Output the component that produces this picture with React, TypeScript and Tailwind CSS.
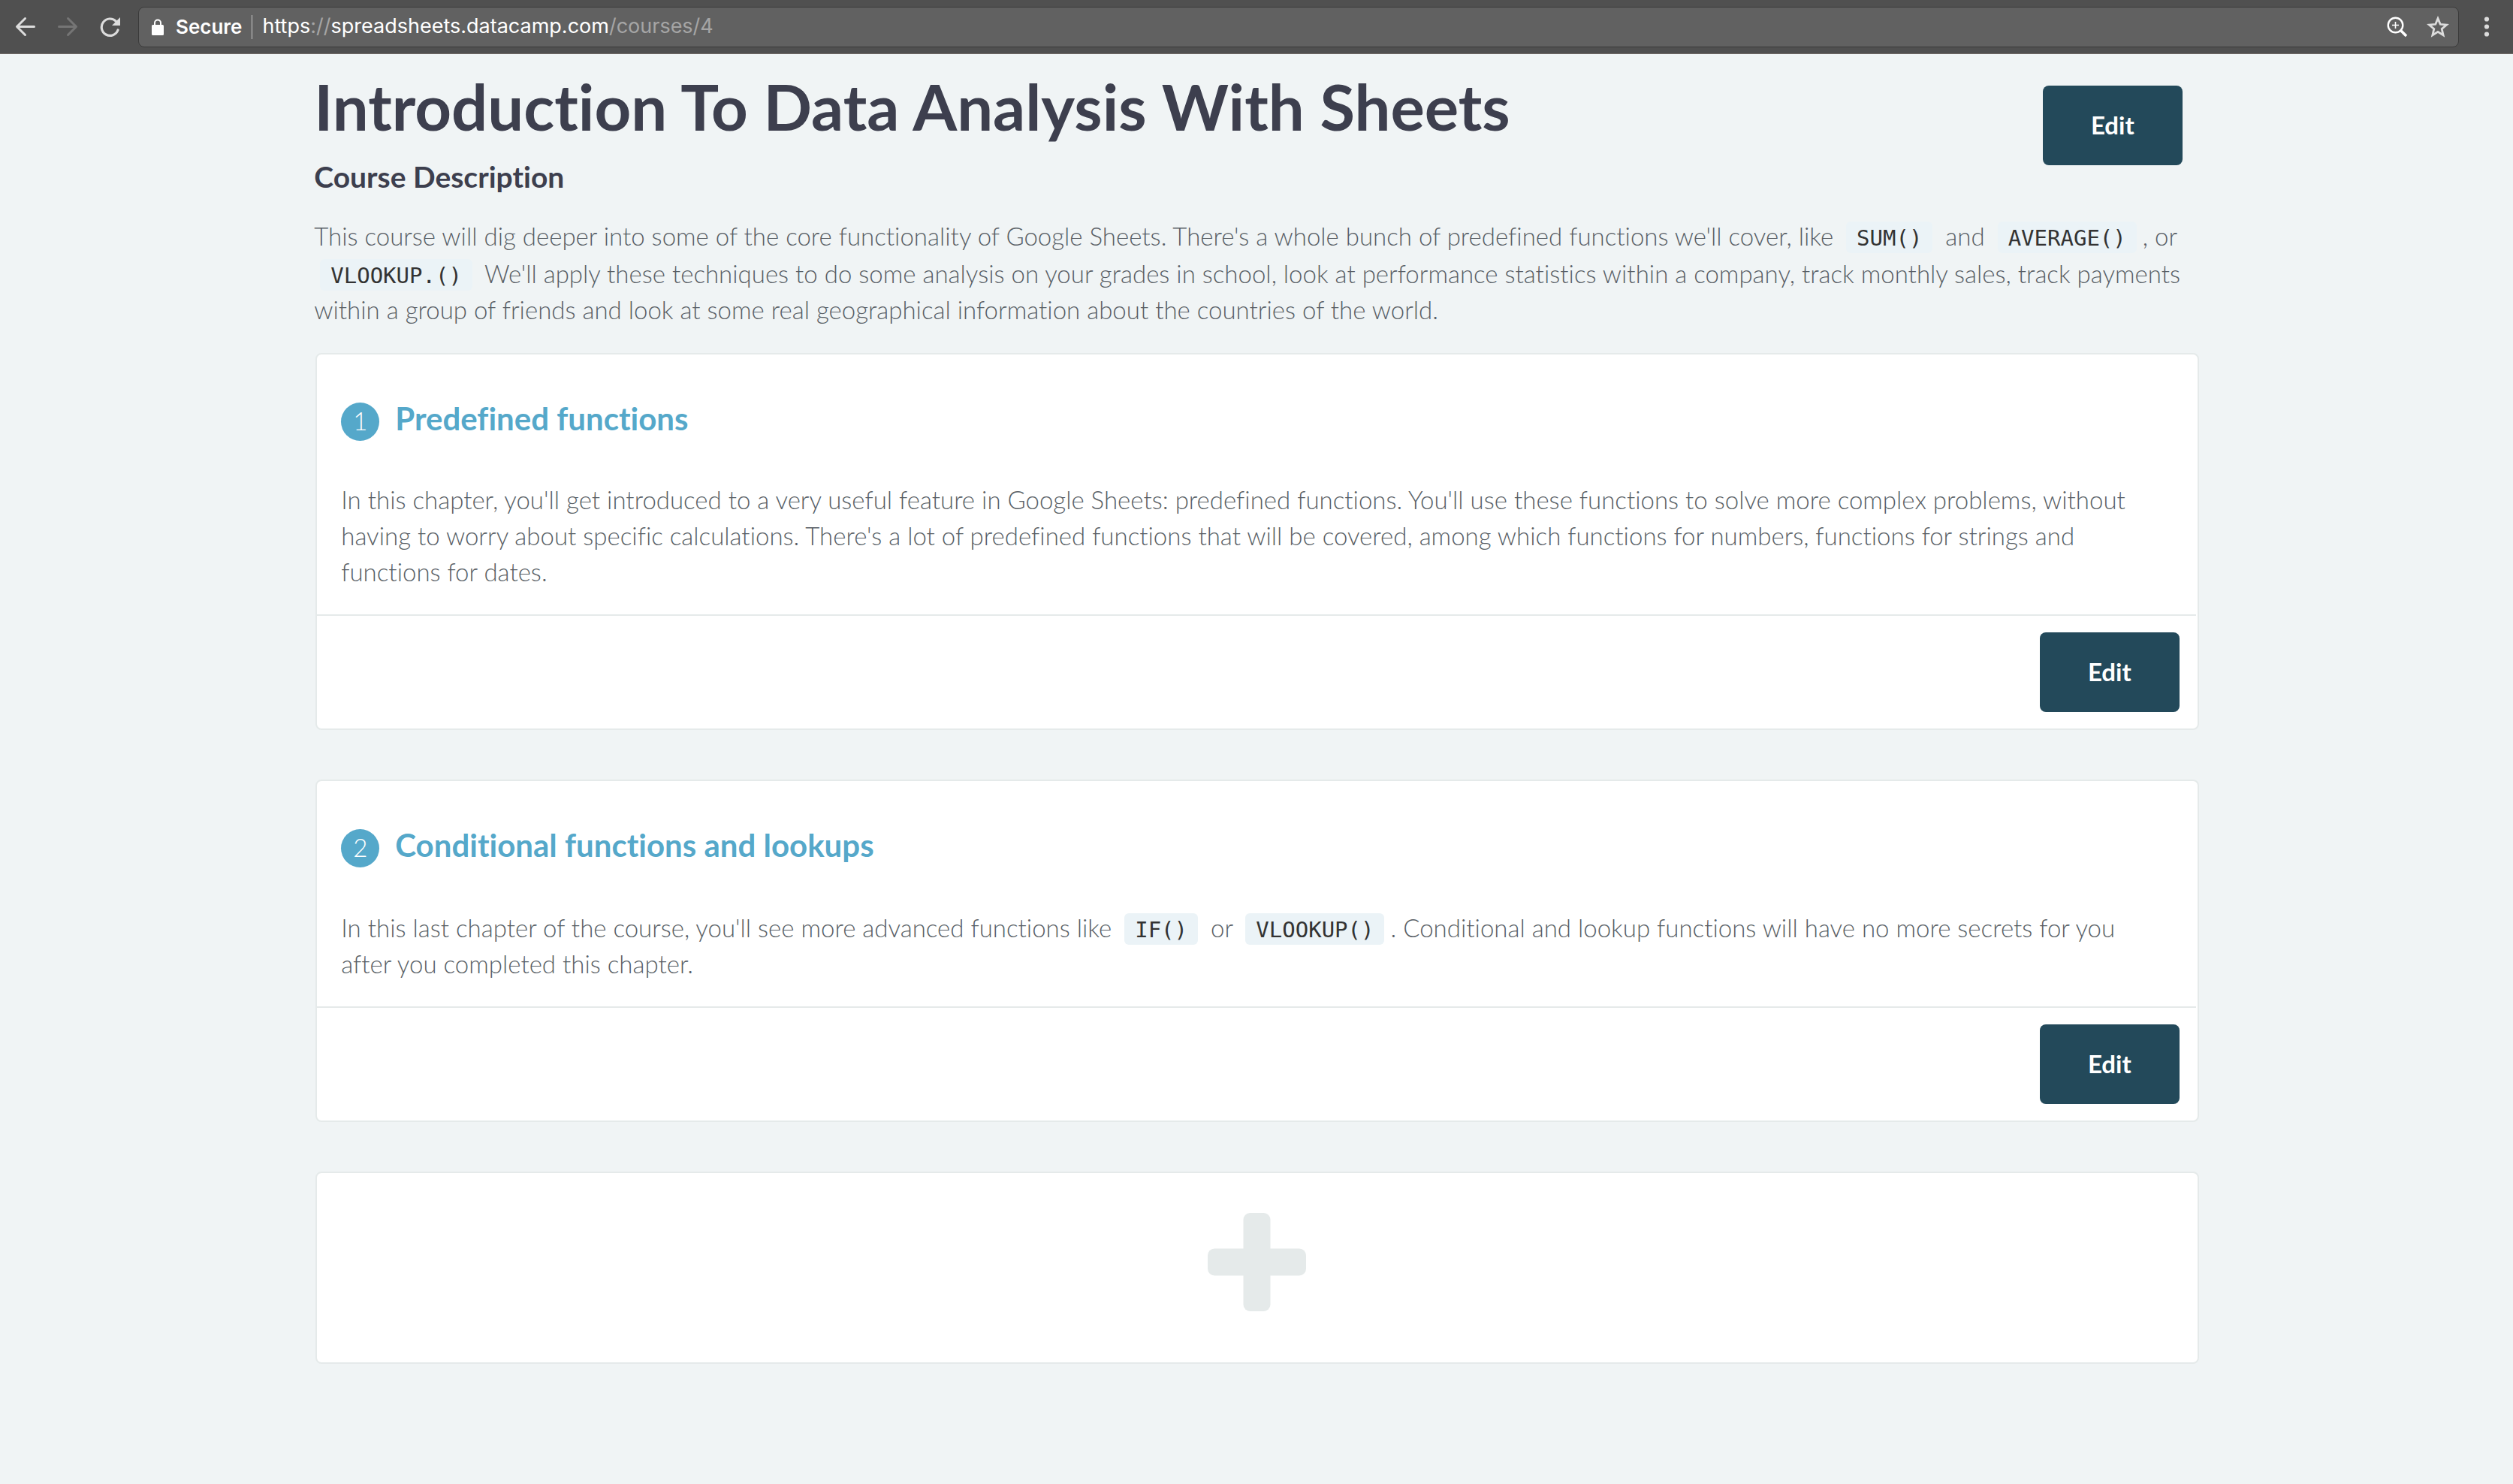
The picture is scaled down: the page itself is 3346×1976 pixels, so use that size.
import type { ReactNode } from "react";

function Code({ children }: { children: ReactNode }) {
  return (
    <code className="mx-2 mt-[7px] inline-block rounded-md bg-[#ebf3f7] px-[14px] pt-1 pb-[2px] font-['DejaVu_Sans_Mono',monospace] text-[29px] leading-[36px] text-[#333333]">
      {children}
    </code>
  );
}

function EditButton() {
  return (
    <button
      type="button"
      className="h-[106px] rounded-lg bg-[#23495a] px-[64px] text-[33px] font-bold text-white"
    >
      Edit
    </button>
  );
}

function Chapter({ number, title, children }: { number: number; title: string; children: ReactNode }) {
  return (
    <section className="rounded-lg border-2 border-[#e5eaea] bg-white">
      <div className="pt-16 pr-10 pb-[33px] pl-8">
        <div className="flex items-start gap-[21px]">
          <span className="h-[51px] w-[51px] rounded-full bg-[#55a8ca] text-center text-[33px] leading-[48px] font-light text-white">
            {number}
          </span>
          <h2 className="text-[42px] leading-none font-bold">
            <a href={"#chapter-" + number} className="text-[#55a8ca]">
              {title}
            </a>
          </h2>
        </div>
        <p className="mt-[54px] text-[33px] leading-[48px] font-light text-[#595f66]">{children}</p>
      </div>
      <div className="mr-[2px] flex justify-end border-t-2 border-[#e5eaea] px-[22px] py-[22px]">
        <EditButton />
      </div>
    </section>
  );
}

function BrowserBar() {
  return (
    <nav
      aria-label="Browser"
      className="flex h-[72px] items-center border-b border-[#6f6866] bg-[#505050] pl-5 font-['Inter',sans-serif] text-[#dcdcdc]"
    >
      <div className="flex gap-7">
        <button type="button" aria-label="Back">
          <svg className="h-7 w-7" viewBox="0 0 28 28" fill="none" stroke="currentColor" strokeWidth="3" strokeLinecap="round" strokeLinejoin="round">
            <path d="M25.5 13.5H3M13.5 2.5L2.5 13.5L13.5 24.5" />
          </svg>
        </button>
        <button type="button" aria-label="Forward" className="text-[#757575]">
          <svg className="h-7 w-7" viewBox="0 0 28 28" fill="none" stroke="currentColor" strokeWidth="3" strokeLinecap="round" strokeLinejoin="round">
            <path d="M2.5 13.5H25M14.5 2.5L25.5 13.5L14.5 24.5" />
          </svg>
        </button>
        <button type="button" aria-label="Reload">
          <svg className="h-7 w-7" viewBox="0 0 28 28">
            <path d="M22.6 6.5A11.2 11.2 0 1 0 25 18" fill="none" stroke="currentColor" strokeWidth="3.2" strokeLinecap="round" />
            <path d="M28 1V12H17Z" fill="currentColor" />
          </svg>
        </button>
      </div>
      <div className="ml-6 flex h-[54px] flex-1 items-center rounded-lg border border-[#3a3a3a] bg-[#616161] pr-3 pl-[17px] text-[27px] text-white">
        <svg className="h-[22px] w-4" viewBox="0 0 16 22" aria-hidden="true">
          <path d="M4 9V5.5a4 4 0 0 1 8 0V9" fill="none" stroke="currentColor" strokeWidth="2" />
          <rect y="8" width="16" height="14" rx="1.5" fill="currentColor" />
        </svg>
        <span className="ml-4 text-[26px] font-semibold">Secure</span>
        <span className="mx-[13px] h-8 w-px bg-[#c8c8c8]" />
        <span className="flex-1">
          https<span className="text-[#a5a5a5]">://</span>spreadsheets.datacamp.com
          <span className="text-[#a5a5a5]">/courses/4</span>
        </span>
        <button type="button" aria-label="Zoom" className="mr-[25px]">
          <svg className="h-7 w-7" viewBox="0 0 28 28" fill="none" stroke="currentColor">
            <circle cx="11.5" cy="11.5" r="9.8" strokeWidth="2.4" />
            <path d="M11.5 7v9M7 11.5h9" strokeWidth="1.6" />
            <path d="M18.5 18.5L26 26" strokeWidth="3.6" />
          </svg>
        </button>
        <button type="button" aria-label="Bookmark" className="text-[#dcdcdc]">
          <svg className="h-[30px] w-[30px]" viewBox="0 0 30 30">
            <path
              d="M15 3.6L18.2 11.3L26.6 12L20.2 17.5L22.1 25.7L15 21.3L7.9 25.7L9.8 17.5L3.4 12L11.8 11.3Z"
              fill="none"
              stroke="currentColor"
              strokeWidth="2.8"
            />
          </svg>
        </button>
      </div>
      <button type="button" aria-label="Menu" className="mr-5 ml-6">
        <svg className="h-7 w-7" viewBox="0 0 28 28" fill="currentColor">
          <circle cx="13" cy="3.5" r="3.1" />
          <circle cx="13" cy="13.5" r="3.1" />
          <circle cx="13" cy="23.5" r="3.1" />
        </svg>
      </button>
    </nav>
  );
}

export default function App() {
  return (
    <div className="min-h-screen bg-[#f0f4f5] font-['Lato',sans-serif] text-[#3d3f4e] [font-variant-ligatures:none]">
      <BrowserBar />
      <main className="mx-auto w-3/4 pt-[19px] pb-16">
        <header className="flex items-start justify-between pr-[22px]">
          <div>
            <h1 className="text-[85px] leading-[100px] font-bold">Introduction To Data Analysis With Sheets</h1>
            <h2 className="mt-5 text-[39px] leading-[48px] font-bold">Course Description</h2>
          </div>
          <div className="pt-[23px]">
            <EditButton />
          </div>
        </header>
        <p className="mt-[29px] text-[33px] leading-[48px] font-light text-[#595f66]">
          This course will dig deeper into some of the core functionality of Google Sheets. There's a whole bunch of
          predefined functions we'll cover, like <Code>SUM()</Code> and <Code>AVERAGE()</Code>, or{" "}
          <Code>VLOOKUP.()</Code> We'll apply these techniques to do some analysis on your grades in school, look at
          performance statistics within a company, track monthly sales, track payments within a group of friends and
          look at some real geographical information about the countries of the world.
        </p>
        <div className="mt-[34px] flex flex-col gap-[66px] pl-[2px]">
          <Chapter number={1} title="Predefined functions">
            In this chapter, you'll get introduced to a very useful feature in Google Sheets: predefined functions.
            You'll use these functions to solve more complex problems, without having to worry about specific
            calculations. There's a lot of predefined functions that will be covered, among which functions for
            numbers, functions for strings and functions for dates.
          </Chapter>
          <Chapter number={2} title="Conditional functions and lookups">
            In this last chapter of the course, you'll see more advanced functions like <Code>IF()</Code> or{" "}
            <Code>VLOOKUP()</Code>. Conditional and lookup functions will have no more secrets for you after you
            completed this chapter.
          </Chapter>
          <button
            type="button"
            aria-label="Add chapter"
            className="flex justify-center rounded-lg border-2 border-[#e5eaea] bg-white pt-[53px] pr-[2px] pb-[68px]"
          >
            <svg className="h-[131px] w-[131px]" viewBox="0 0 131 131" fill="#e5eaea">
              <rect x="47.5" width="36" height="131" rx="9" />
              <rect y="47.5" width="131" height="36" rx="9" />
            </svg>
          </button>
        </div>
      </main>
    </div>
  );
}
